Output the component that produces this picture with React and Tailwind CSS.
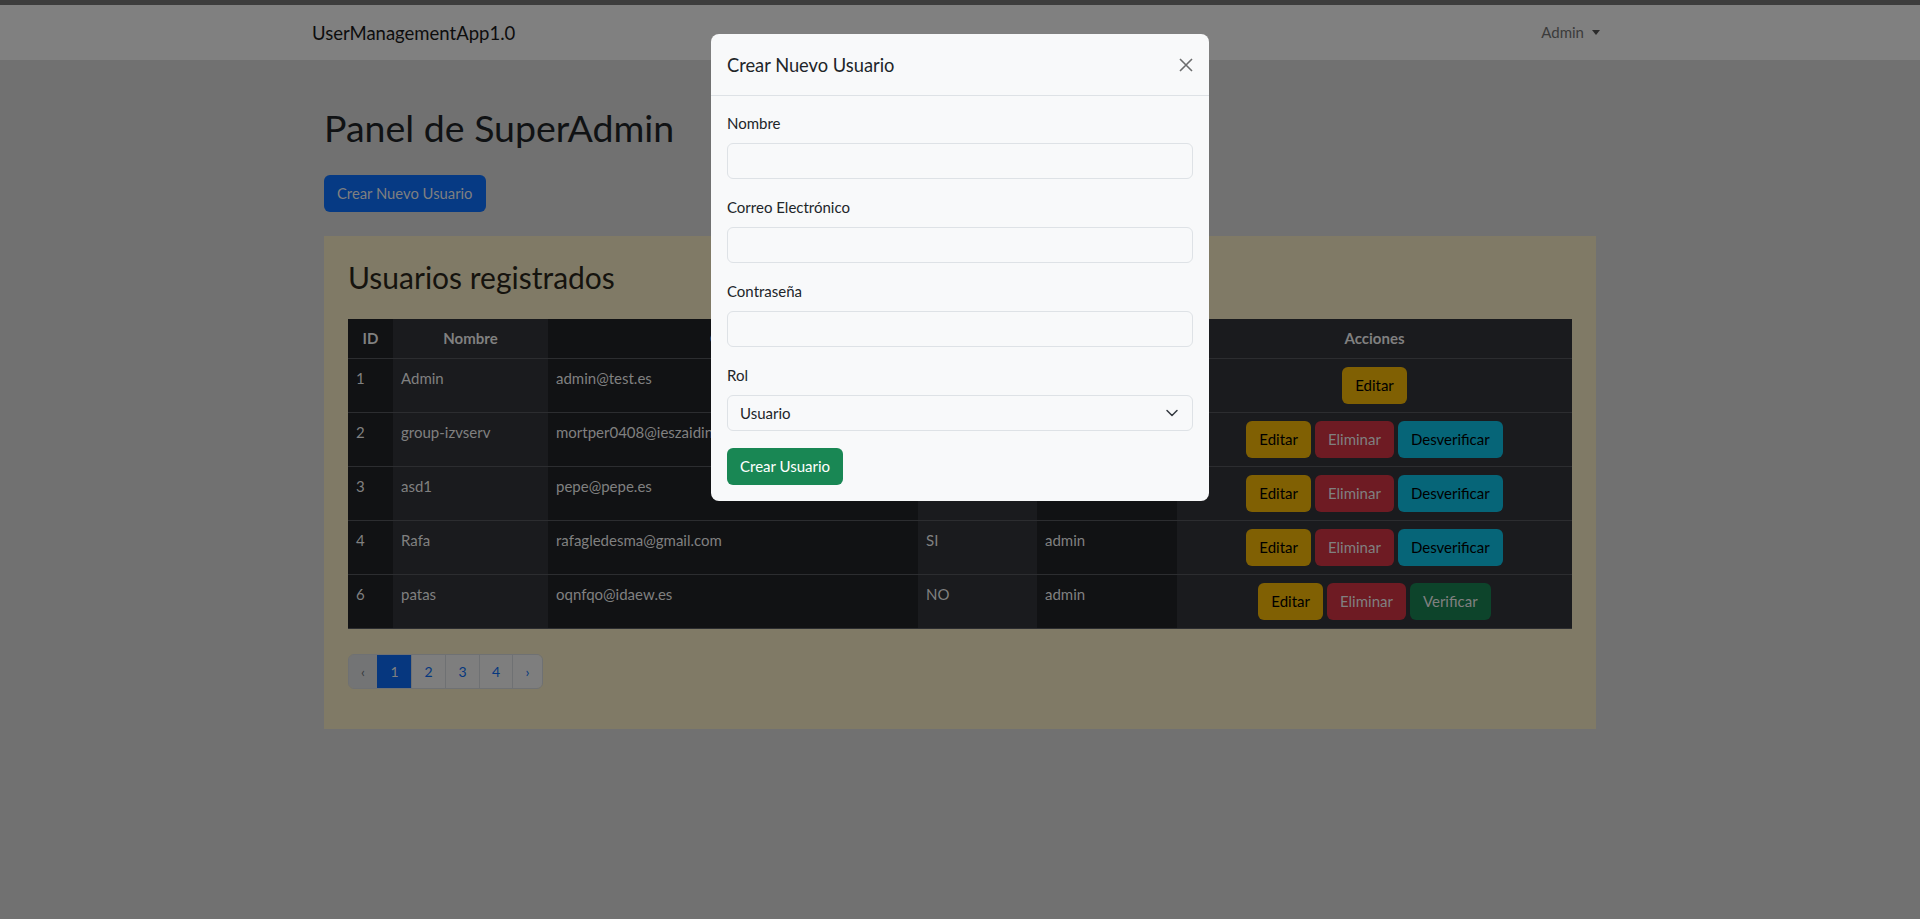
import React from "react";

const users = [
  { id: 1, name: "Admin", email: "admin@test.es", ver: "SI", role: "superadmin", actions: ["edit"] },
  { id: 2, name: "group-izvserv", email: "mortper0408@ieszaidinvergeles.org", ver: "SI", role: "usuario", actions: ["edit", "del", "unver"] },
  { id: 3, name: "asd1", email: "pepe@pepe.es", ver: "SI", role: "usuario", actions: ["edit", "del", "unver"] },
  { id: 4, name: "Rafa", email: "rafagledesma@gmail.com", ver: "SI", role: "admin", actions: ["edit", "del", "unver"] },
  { id: 6, name: "patas", email: "oqnfqo@idaew.es", ver: "NO", role: "admin", actions: ["edit", "del", "ver"] },
];

const btnBase = "px-[12px] py-[6px] border border-transparent rounded-[6px] text-[15px] leading-[23px]";

function ActionBtn({ kind }) {
  if (kind === "edit") return <button className={btnBase + " bg-[#806003] text-[#000000]"}>Editar</button>;
  if (kind === "del") return <button className={btnBase + " bg-[#6e1b23] text-[#808080]"}>Eliminar</button>;
  if (kind === "unver") return <button className={btnBase + " bg-[#066578] text-[#000000]"}>Desverificar</button>;
  return <button className={btnBase + " bg-[#0d442b] text-[#808080]"}>Verificar</button>;
}

const odd = "bg-[#111214]";
const even = "bg-[#1a1b1e]";
const cellB = "border-b border-[#2c2d30] px-[8px] py-[8px] align-top";

function Field({ label, children }) {
  return (
    <div className="mb-[17px]">
      <label className="block text-[15px] leading-[23px] mb-[8px] text-[#212529]">{label}</label>
      {children}
    </div>
  );
}

export default function App() {
  return (
    <div className="min-h-screen bg-[#717171] font-['Lato',sans-serif]">
      <div className="h-[5px] bg-[#3d3d3d]" />
      <nav className="h-[55px] bg-[#808080] flex items-center">
        <div className="w-[1296px] mx-auto flex items-center justify-between">
          <span className="text-[18.5px] leading-[30px] text-[#0d0d0d]">UserManagementApp1.0</span>
          <span className="flex items-center gap-[8px] mr-[8px] text-[15px] leading-[23px] text-[#3b3b3b]">
            Admin
            <span className="inline-block w-0 h-0 border-l-[4px] border-r-[4px] border-t-[5px] border-l-transparent border-r-transparent border-t-[#2b2b2b]" />
          </span>
        </div>
      </nav>

      <main className="w-[1272px] mx-auto">
        <h1 className="mt-[45px] text-[37.5px] leading-[45px] text-[#101214]">Panel de SuperAdmin</h1>
        <button className="mt-[25px] px-[12px] py-[6px] border border-transparent rounded-[6px] bg-[#063a84] text-[#808080] text-[14.8px] leading-[23px]">
          Crear Nuevo Usuario
        </button>

        <section className="mt-[24px] bg-[#807a66] px-[24px] pt-[24px] pb-[40px]">
          <h2 className="text-[30px] leading-[34px] text-[#15130e] mb-[25px]">Usuarios registrados</h2>
          <table className="w-[1224px] table-fixed border-collapse text-[15px] leading-[23px] text-[#808080]">
            <colgroup>
              <col className="w-[45px]" />
              <col className="w-[155px]" />
              <col className="w-[370px]" />
              <col className="w-[119px]" />
              <col className="w-[140px]" />
              <col className="w-[395px]" />
            </colgroup>
            <thead>
              <tr>
                <th className={cellB + " " + odd + " text-center font-bold"}>ID</th>
                <th className={cellB + " " + even + " text-center font-bold"}>Nombre</th>
                <th className={cellB + " " + odd + " text-center font-bold"}>Correo</th>
                <th className={cellB + " " + even + " text-center font-bold"}>Verificado</th>
                <th className={cellB + " " + odd + " text-center font-bold"}>Rol</th>
                <th className={cellB + " " + even + " text-center font-bold"}>Acciones</th>
              </tr>
            </thead>
            <tbody>
              {users.map((u) => (
                <tr key={u.id}>
                  <td className={cellB + " " + odd}>{u.id}</td>
                  <td className={cellB + " " + even}>{u.name}</td>
                  <td className={cellB + " " + odd + " whitespace-nowrap overflow-hidden"}>{u.email}</td>
                  <td className={cellB + " " + even}>{u.ver}</td>
                  <td className={cellB + " " + odd}>{u.role}</td>
                  <td className={cellB + " " + even}>
                    <div className="flex justify-center gap-[4px]">
                      {u.actions.map((a) => (
                        <ActionBtn key={a} kind={a} />
                      ))}
                    </div>
                  </td>
                </tr>
              ))}
            </tbody>
          </table>

          <nav className="mt-[25px] flex">
            <div className="flex border border-[#6f7173] rounded-[6px] overflow-hidden text-[14px] leading-[21px]">
              <span className="w-[28px] py-[6px] text-center bg-[#737475] text-[#363b3e]">‹</span>
              <span className="w-[34px] py-[6px] text-center bg-[#06377f] text-[#808080] border-l border-[#06377f]">1</span>
              <span className="w-[34px] py-[6px] text-center bg-[#7e7e7e] text-[#06377f] border-l border-[#6f7173]">2</span>
              <span className="w-[34px] py-[6px] text-center bg-[#7e7e7e] text-[#06377f] border-l border-[#6f7173]">3</span>
              <span className="w-[33px] py-[6px] text-center bg-[#7e7e7e] text-[#06377f] border-l border-[#6f7173]">4</span>
              <span className="w-[30px] py-[6px] text-center bg-[#7e7e7e] text-[#06377f] border-l border-[#6f7173]">›</span>
            </div>
          </nav>
        </section>
      </main>

      <div className="fixed inset-0 flex justify-center items-start pt-[34px]">
        <div className="w-[498px] bg-[#f8f9fa] rounded-[8px]">
          <div className="h-[62px] px-[16px] flex items-center justify-between border-b border-[#dee2e6]">
            <h5 className="text-[18.3px] leading-[28px] text-[#212529]">Crear Nuevo Usuario</h5>
            <svg width="14" height="14" viewBox="0 0 14 14">
              <path d="M1 1L13 13M13 1L1 13" stroke="#6c6d6e" strokeWidth="1.6" fill="none" />
            </svg>
          </div>
          <div className="px-[16px] pt-[16px] pb-[16px]">
            <Field label="Nombre">
              <div className="h-[36px] w-full border border-[#dee2e6] rounded-[6px] bg-[#f8f9fa]" />
            </Field>
            <Field label="Correo Electrónico">
              <div className="h-[36px] w-full border border-[#dee2e6] rounded-[6px] bg-[#f8f9fa]" />
            </Field>
            <Field label="Contraseña">
              <div className="h-[36px] w-full border border-[#dee2e6] rounded-[6px] bg-[#f8f9fa]" />
            </Field>
            <Field label="Rol">
              <div className="h-[36px] w-full border border-[#dee2e6] rounded-[6px] bg-[#f8f9fa] flex items-center justify-between pl-[12px] pr-[13px]">
                <span className="text-[15px] text-[#212529]">Usuario</span>
                <svg width="14" height="10" viewBox="0 0 16 12">
                  <path d="M2 3l6 6 6-6" stroke="#343a40" strokeWidth="1.8" fill="none" strokeLinecap="round" strokeLinejoin="round" />
                </svg>
              </div>
            </Field>
            <button className="px-[12px] py-[6px] border border-transparent rounded-[6px] bg-[#198754] text-white text-[15px] leading-[23px]">
              Crear Usuario
            </button>
          </div>
        </div>
      </div>
    </div>
  );
}
